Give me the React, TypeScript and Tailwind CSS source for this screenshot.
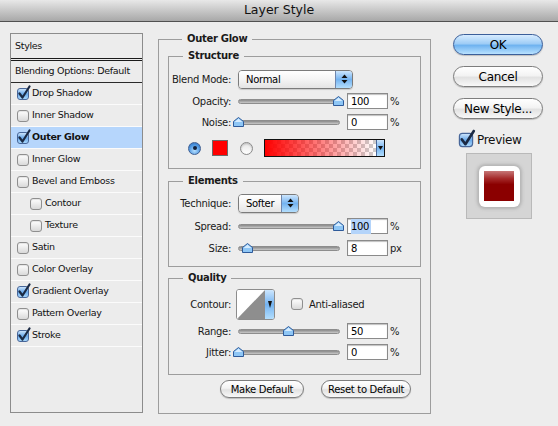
import React from "react";

const FONT = "font-['DejaVu_Sans',Verdana,sans-serif] tracking-[-0.3px]";

const STYLES = [
  { name: "Drop Shadow", checked: true },
  { name: "Inner Shadow", checked: false },
  { name: "Outer Glow", checked: true, selected: true, bold: true },
  { name: "Inner Glow", checked: false },
  { name: "Bevel and Emboss", checked: false },
  { name: "Contour", checked: false, indent: true },
  { name: "Texture", checked: false, indent: true },
  { name: "Satin", checked: false },
  { name: "Color Overlay", checked: false },
  { name: "Gradient Overlay", checked: true },
  { name: "Pattern Overlay", checked: false },
  { name: "Stroke", checked: true },
];

function CheckBox({ checked }: { checked: boolean }) {
  if (!checked) {
    return (
      <span className="block h-[12px] w-[12px] shrink-0 rounded-[3px] border border-[#8f8f8f] bg-gradient-to-b from-white to-[#d9d9d9] shadow-[inset_0_1px_1px_rgba(0,0,0,0.1)]" />
    );
  }
  return (
    <span className="relative block h-[12px] w-[12px] shrink-0 rounded-[3px] border border-[#48679a] bg-gradient-to-b from-[#c9e3fb] via-[#69a9ea] to-[#a7d6fb]">
      <svg
        className="absolute left-[-1px] top-[-4px]"
        width="15"
        height="15"
        viewBox="0 0 15 15"
      >
        <path
          d="M2.5 8.5 L5.5 12.5 L12.5 1.5"
          fill="none"
          stroke="#1b2a44"
          strokeWidth="2.2"
          strokeLinecap="round"
          strokeLinejoin="round"
        />
      </svg>
    </span>
  );
}

function Radio({ on }: { on: boolean }) {
  if (on) {
    return (
      <span className="flex h-[13px] w-[13px] items-center justify-center rounded-full border border-[#3f5f92] bg-[radial-gradient(circle_at_50%_70%,#b7e0ff,#4c95e0_60%,#2e6bb8)]">
        <span className="h-[4px] w-[4px] rounded-full bg-[#14213a]" />
      </span>
    );
  }
  return (
    <span className="block h-[13px] w-[13px] rounded-full border border-[#8a8a8a] bg-gradient-to-b from-[#e6e6e6] to-white shadow-[inset_0_1px_2px_rgba(0,0,0,0.2)]" />
  );
}

function Stepper() {
  return (
    <svg width="7" height="10" viewBox="0 0 7 10">
      <path d="M3.5 0.5 L6.5 4 L0.5 4 Z" fill="#111" />
      <path d="M3.5 9.5 L6.5 6 L0.5 6 Z" fill="#111" />
    </svg>
  );
}

function PopUp({ value, width }: { value: string; width: string }) {
  return (
    <div
      className={`flex h-[19px] items-stretch overflow-hidden rounded-[4px] border border-[#7b7b7b] shadow-[0_1px_1px_rgba(0,0,0,0.15)] ${width}`}
    >
      <div className="flex flex-1 items-center bg-gradient-to-b from-white via-[#f4f4f4] to-[#e4e4e4] pl-[7px] text-[10px] text-black">
        {value}
      </div>
      <div className="flex w-[17px] items-center justify-center border-l border-[#6f86ad] bg-gradient-to-b from-[#cde6fd] via-[#74b3f0] to-[#b3defd]">
        <Stepper />
      </div>
    </div>
  );
}

function Thumb() {
  return (
    <svg width="11" height="10" viewBox="0 0 11 10">
      <path
        d="M5.5 0.5 L10.5 4.5 L10.5 9.5 L0.5 9.5 L0.5 4.5 Z"
        fill="#8ec6f5"
        stroke="#2e5a9a"
        strokeWidth="1"
        strokeLinejoin="round"
      />
      <path d="M1.5 5 L5.5 1.7 L9.5 5 Z" fill="#d6ecff" />
    </svg>
  );
}

function Slider({ value }: { value: number }) {
  return (
    <div className="relative h-[10px] w-[102px]">
      <div className="absolute left-0 right-0 top-[3px] h-[5px] rounded-full border border-[#8d8d8d] bg-gradient-to-b from-[#8a8a8a] to-[#c9c9c9]" />
      <div className="absolute top-0" style={{ left: `${value - 5}px` }}>
        <Thumb />
      </div>
    </div>
  );
}

function NumField({ value, highlight }: { value: string; highlight?: boolean }) {
  return (
    <div className="flex h-[16px] w-[41px] items-center border border-[#8a8a8a] bg-white pl-[3px] text-[10px] text-black shadow-[inset_0_1px_1px_rgba(0,0,0,0.25)]">
      <span className={highlight ? "bg-[#b4d4fa] pr-[2px]" : ""}>{value}</span>
    </div>
  );
}

function SliderRow({
  label,
  value,
  pos,
  unit,
  highlight,
  className,
}: {
  label: string;
  value: string;
  pos: number;
  unit: string;
  highlight?: boolean;
  className?: string;
}) {
  return (
    <div className={`flex h-[20px] items-center ${className ?? ""}`}>
      <div className="w-[63px] whitespace-nowrap pr-[1px] text-right text-[10px] text-[#1a1a1a]">
        {label}
      </div>
      <div className="ml-[6px]">
        <Slider value={pos} />
      </div>
      <div className="ml-[7px]">
        <NumField value={value} highlight={highlight} />
      </div>
      <div className="ml-[2px] text-[10px] text-[#1a1a1a]">{unit}</div>
    </div>
  );
}

function Legend({ children }: { children: React.ReactNode }) {
  return (
    <legend className="ml-[14px] px-[5px] text-[10px] font-bold leading-[12px] text-[#1a1a1a]">
      {children}
    </legend>
  );
}

function AquaButton({
  children,
  primary,
  className,
}: {
  children: React.ReactNode;
  primary?: boolean;
  className?: string;
}) {
  const skin = primary
    ? "border-[#3b5f9a] bg-[linear-gradient(to_bottom,#d7ecff_0%,#9fcdf6_45%,#6fb3f0_55%,#b9e2ff_100%)]"
    : "border-[#7d7d7d] bg-[linear-gradient(to_bottom,#ffffff_0%,#f3f3f3_45%,#e2e2e2_55%,#f8f8f8_100%)]";
  return (
    <div
      className={`flex items-center justify-center whitespace-nowrap rounded-full border text-black shadow-[0_1px_1px_rgba(0,0,0,0.2)] ${skin} ${className ?? ""}`}
    >
      {children}
    </div>
  );
}

export default function App() {
  return (
    <div className={`h-[426px] w-[558px] overflow-hidden bg-[#ededed] ${FONT}`}>
      {/* title bar */}
      <div className="flex h-[22px] items-center justify-center border-b border-[#515151] bg-gradient-to-b from-[#e8e8e8] to-[#a8a8a8] text-[12.5px] tracking-normal text-[#111]">
        Layer Style
      </div>

      <div className="flex items-start pl-[10px] pt-[11px]">
        {/* styles list */}
        <div className="flex h-[380px] w-[133px] flex-col border border-[#8c8c8c] bg-[#ececec] text-[9.5px]">
          <div className="flex h-[27px] items-center border-b-[3px] border-double border-[#1a1a1a] pl-[4px] text-[#111]">
            Styles
          </div>
          <div className="flex h-[22px] items-center whitespace-nowrap border-b border-[#2a2a2a] pl-[4px] text-[#111]">
            Blending Options: Default
          </div>
          {STYLES.map((s) => (
            <div
              key={s.name}
              className={`flex h-[22px] items-center gap-[3px] whitespace-nowrap border-b border-[#fbfbfb] text-[#111] ${
                s.indent ? "pl-[19px]" : "pl-[6px]"
              } ${s.selected ? "bg-[#b6d6fc]" : ""} ${s.bold ? "font-bold" : ""}`}
            >
              <CheckBox checked={s.checked} />
              <span>{s.name}</span>
            </div>
          ))}
        </div>

        {/* settings */}
        <fieldset className="ml-[15px] flex h-[381px] w-[273px] flex-col border border-[#9d9d9d] px-[9px]">
          <Legend>Outer Glow</Legend>

          <fieldset className="mt-[5px] h-[119px] border border-[#9d9d9d]">
            <Legend>Structure</Legend>
            <div className="mt-[7px] flex h-[20px] items-center">
              <div className="w-[63px] whitespace-nowrap pr-[1px] text-right text-[10px] text-[#1a1a1a]">
                Blend Mode:
              </div>
              <div className="ml-[6px]">
                <PopUp value="Normal" width="w-[115px]" />
              </div>
            </div>
            <SliderRow className="mt-[2px]" label="Opacity:" value="100" pos={100} unit="%" />
            <SliderRow className="mt-[1px]" label="Noise:" value="0" pos={0} unit="%" />
            <div className="mt-[6px] flex h-[20px] items-center">
              <div className="ml-[19px]">
                <Radio on />
              </div>
              <div className="ml-[11px] h-[16px] w-[16px] border border-[#6b6b6b] bg-[#ff0000]" />
              <div className="ml-[12px]">
                <Radio on={false} />
              </div>
              <div className="ml-[11px] flex h-[18px] w-[121px] border border-[#111]">
                <div className="flex-1 bg-[linear-gradient(to_right,#ff0000,rgba(255,0,0,0)),repeating-conic-gradient(#cdcdcd_0_25%,#ffffff_0_50%)] [background-size:100%_100%,8px_8px]" />
                <div className="flex w-[8px] items-center justify-center border-l border-[#4b6a9c] bg-gradient-to-b from-[#cde6fd] via-[#74b3f0] to-[#b3defd]">
                  <svg width="5" height="4" viewBox="0 0 5 4">
                    <path d="M0 0 L5 0 L2.5 4 Z" fill="#111" />
                  </svg>
                </div>
              </div>
            </div>
          </fieldset>

          <fieldset className="mt-[6px] h-[92px] border border-[#9d9d9d]">
            <Legend>Elements</Legend>
            <div className="mt-[6px] flex h-[20px] items-center">
              <div className="w-[63px] whitespace-nowrap pr-[1px] text-right text-[10px] text-[#1a1a1a]">
                Technique:
              </div>
              <div className="ml-[6px]">
                <PopUp value="Softer" width="w-[61px]" />
              </div>
            </div>
            <SliderRow className="mt-[3px]" label="Spread:" value="100" pos={100} unit="%" highlight />
            <SliderRow className="mt-[2px]" label="Size:" value="8" pos={9} unit="px" />
          </fieldset>

          <fieldset className="mt-[5px] h-[103px] border border-[#9d9d9d]">
            <Legend>Quality</Legend>
            <div className="mt-[4px] flex h-[32px] items-center">
              <div className="w-[63px] whitespace-nowrap pr-[1px] text-right text-[10px] text-[#1a1a1a]">
                Contour:
              </div>
              <div className="ml-[4px] flex h-[31px] w-[39px] overflow-hidden rounded-[3px] border border-[#8c8c8c] bg-white">
                <svg width="28" height="29" viewBox="0 0 28 29" className="shrink-0">
                  <rect width="28" height="29" fill="#ffffff" />
                  <path d="M0 29 L28 0 L28 29 Z" fill="#8e8e8e" />
                </svg>
                <div className="flex flex-1 items-center justify-center bg-gradient-to-b from-[#cde6fd] via-[#74b3f0] to-[#b3defd]">
                  <svg width="4" height="7" viewBox="0 0 4 7">
                    <path d="M0 0 L4 0 L2 7 Z" fill="#111" />
                  </svg>
                </div>
              </div>
              <div className="ml-[16px] flex items-center gap-[6px] whitespace-nowrap text-[10px] text-[#1a1a1a]">
                <CheckBox checked={false} />
                <span>Anti-aliased</span>
              </div>
            </div>
            <SliderRow className="mt-[1px]" label="Range:" value="50" pos={50} unit="%" />
            <SliderRow className="mt-[1px]" label="Jitter:" value="0" pos={0} unit="%" />
          </fieldset>

          <div className="mt-[5px] flex gap-[17px] pl-[52px]">
            <AquaButton className="h-[18px] w-[84px] text-[10px]">Make Default</AquaButton>
            <AquaButton className="h-[18px] w-[90px] text-[10px]">Reset to Default</AquaButton>
          </div>
        </fieldset>

        {/* buttons */}
        <div className="ml-[22px] flex w-[90px] flex-col pt-[1px]">
          <AquaButton primary className="h-[21px] text-[12px]">
            OK
          </AquaButton>
          <AquaButton className="mt-[11px] h-[21px] text-[12px]">Cancel</AquaButton>
          <AquaButton className="mt-[11px] h-[21px] text-[12px]">New Style...</AquaButton>
          <div className="mt-[12px] flex items-center gap-[5px] pl-[7px] text-[12px] text-[#111]">
            <span className="scale-[1.2]">
              <CheckBox checked />
            </span>
            <span>Preview</span>
          </div>
          <div className="ml-[13px] mt-[4px] flex h-[66px] w-[66px] items-center justify-center border border-[#b9b9b9] bg-[#d5d5d5]">
            <div className="flex h-[41px] w-[41px] items-center justify-center rounded-[6px] bg-white shadow-[0_0_3px_2px_rgba(150,150,150,0.5)]">
              <div className="h-[30px] w-[30px] bg-[linear-gradient(to_bottom,#c67676_0%,#a52a2a_25%,#8b0000_45%,#8b0000_100%)]" />
            </div>
          </div>
        </div>
      </div>
    </div>
  );
}
